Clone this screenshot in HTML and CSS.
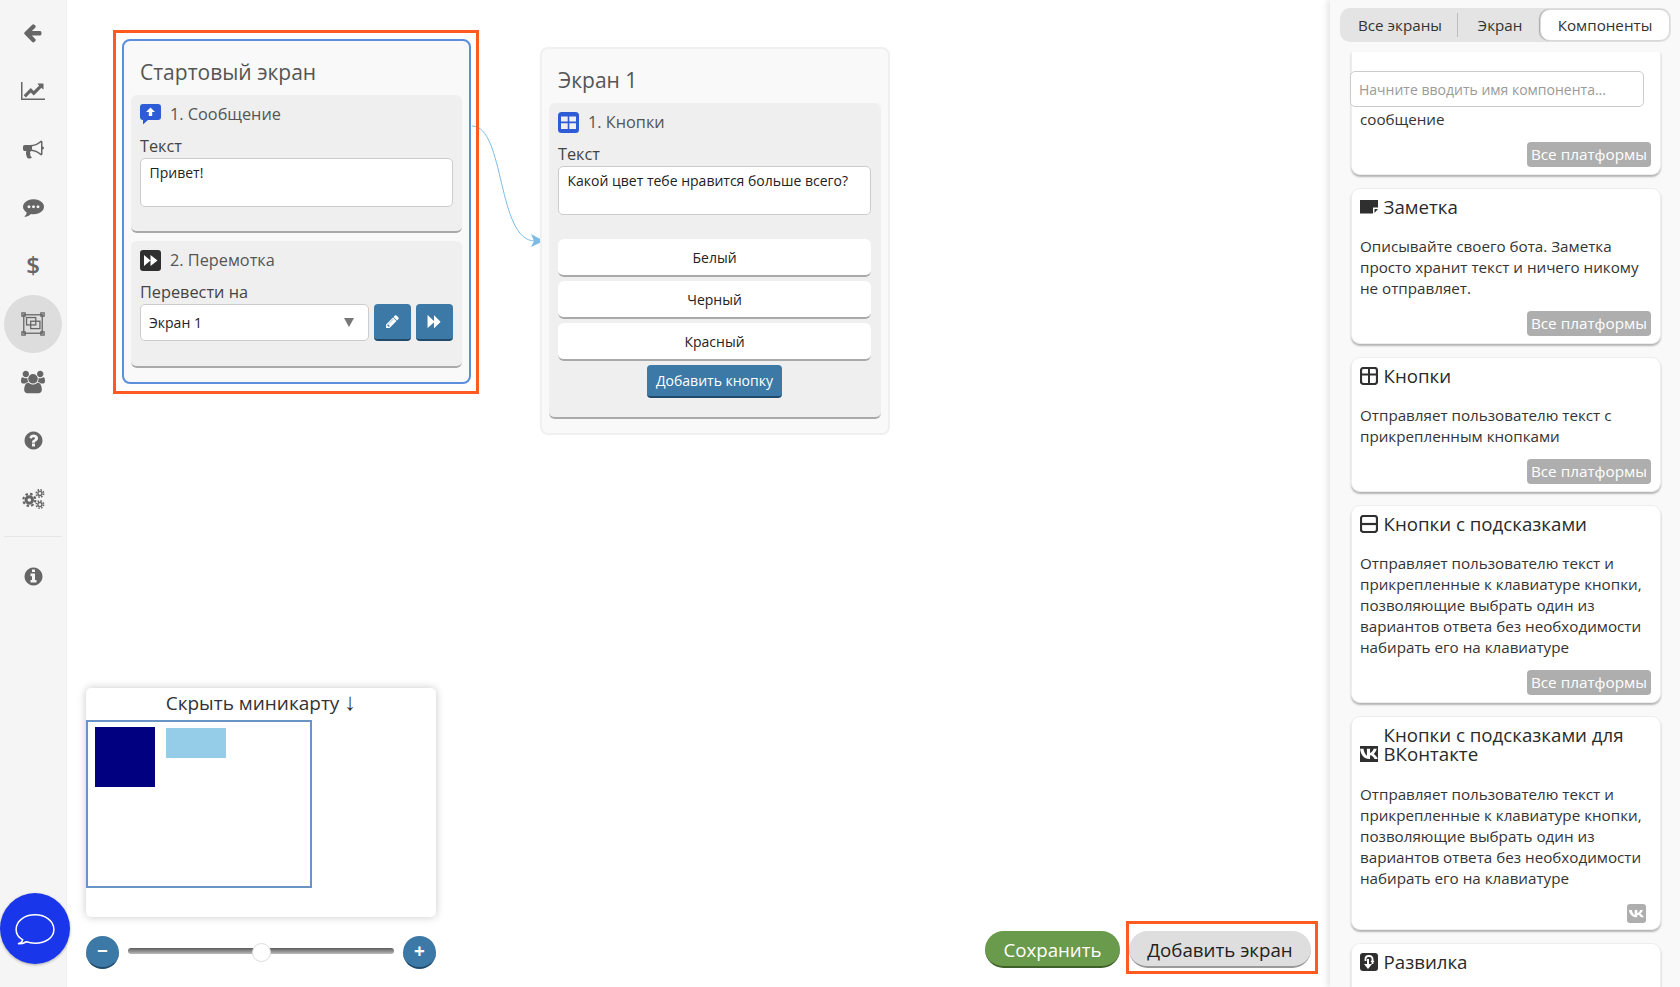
FILE: index.html
```html
<!DOCTYPE html>
<html lang="ru">
<head>
<meta charset="utf-8">
<title>Конструктор</title>
<link rel="stylesheet" href="styles.css">
</head>
<body>
<div class="app">
  <nav class="sidebar">
    <a class="nav-item"><svg class="ico-nav" viewBox="90 80 1792 1792"><path d="M1664 896v128q0 53-32.500 90.500t-84.500 37.500h-704l293 294q38 36 38 90t-38 90l-75 76q-37 37-90 37-52 0-91-37l-651-652q-37-37-37-90 0-52 37-91l651-650q38-38 91-38 52 0 90 38l75 74q38 38 38 91t-38 91l-293 293h704q52 0 84.500 37.500t32.500 90.500z"/></svg></a>
    <a class="nav-item"><svg class="ico-nav wide" viewBox="0 0 2048 1792"><path d="M2048 1536v128h-2048v-1536h128v1408h1920zm-128-1248v435q0 21-19.500 29.500t-35.500-7.500l-121-121-633 633q-10 10-23 10t-23-10l-233-233-416 416-192-192 585-585q10-10 23-10t23 10l233 233 464-464-121-121q-16-16-7.500-35.500t29.500-19.500h435q14 0 23 9t9 23z"/></svg></a>
    <a class="nav-item"><svg class="ico-nav" viewBox="0 0 1792 1792"><path d="M1664 640q53 0 90.500 37.500t37.500 90.500-37.500 90.500-90.500 37.500v384q0 52-38 90t-90 38q-417-347-812-380-58 19-91 66t-31 100.500 40 92.500q-20 33-23 65.500t6 58 33.500 55 48 50 61.500 50.500q-29 58-111.500 83t-168.500 11.500-132-55.500q-7-23-29.500-87.500t-32-94.500-23-89-15-101 3.500-98.500 22-110.500h-122q-66 0-113-47t-47-113v-192q0-66 47-113t113-47h480q435 0 896-384 52 0 90 38t38 90v384zm-128 604v-954q-394 302-768 343v270q377 42 768 341z"/></svg></a>
    <a class="nav-item"><svg class="ico-nav" viewBox="0 -60 1792 1792"><path d="M640 768q0-53-37.500-90.500t-90.500-37.500-90.500 37.500-37.500 90.500 37.500 90.500 90.500 37.500 90.500-37.500 37.500-90.500zm384 0q0-53-37.500-90.500t-90.500-37.500-90.500 37.500-37.500 90.500 37.500 90.500 90.500 37.500 90.500-37.500 37.500-90.500zm384 0q0-53-37.500-90.500t-90.500-37.500-90.500 37.500-37.500 90.500 37.500 90.500 90.500 37.500 90.500-37.500 37.500-90.500zm384 0q0 174-120 321.500t-326 233-450 85.500q-110 0-211-18-173 173-435 229-52 10-86 13-12 1-22-6t-13-18q-4-15 20-37 5-5 23.500-21.500t25.500-23.500 23.500-25.500 24-31.500 20.500-37 20-48 14.500-57.500 12.500-72.500q-146-90-229.500-216.500t-83.500-269.500q0-174 120-321.500t326-233 450-85.500 450 85.500 326 233 120 321.500z"/></svg></a>
    <a class="nav-item nav-dollar">$</a>
    <a class="nav-item active"><svg class="ico-nav wide ico-line" viewBox="0 0 26 26" stroke="#666" stroke-width="1.400"><rect x="3" y="3" width="20" height="20"/><rect x="1" y="1" width="3.500" height="3.500"/><rect x="21.500" y="1" width="3.500" height="3.500"/><rect x="1" y="21.500" width="3.500" height="3.500"/><rect x="21.500" y="21.500" width="3.500" height="3.500"/><rect x="6" y="6" width="10" height="8"/><rect x="10.500" y="10" width="10" height="8"/></svg></a>
    <a class="nav-item"><svg class="ico-nav wide" viewBox="0 0 1920 1792"><path d="M593 896q-162 5-265 128h-134q-82 0-138-40.500t-56-118.500q0-353 124-353 6 0 43.500 21t97.500 42.500 119 21.500q67 0 133-23-5 37-5 66 0 139 81 256zm1071 637q0 120-73 189.500t-194 69.500h-874q-121 0-194-69.500t-73-189.500q0-53 3.500-103.500t14-109 26.500-108.500 43-97.500 62-81 85.500-53.500 111.500-20q10 0 43 21.500t73 48 107 48 135 21.500 135-21.500 107-48 73-48 43-21.500q61 0 111.500 20t85.500 53.500 62 81 43 97.500 26.500 108.500 14 109 3.500 103.500zm-1024-1277q0 106-75 181t-181 75-181-75-75-181 75-181 181-75 181 75 75 181zm704 384q0 159-112.500 271.500t-271.500 112.500-271.500-112.500-112.500-271.500 112.500-271.500 271.500-112.500 271.500 112.500 112.500 271.500zm576 225q0 78-56 118.500t-138 40.500h-134q-103-123-265-128 81-117 81-256 0-29-5-66 66 23 133 23 59 0 119-21.500t97.500-42.500 43.500-21q124 0 124 353zm-128-609q0 106-75 181t-181 75-181-75-75-181 75-181 181-75 181 75 75 181z"/></svg></a>
    <a class="nav-item"><svg class="ico-nav" viewBox="0 0 1792 1792"><path d="M1024 1376v-192q0-14-9-23t-23-9h-192q-14 0-23 9t-9 23v192q0 14 9 23t23 9h192q14 0 23-9t9-23zm256-672q0-88-55.500-163t-138.500-116-170-41q-243 0-371 213-15 24 8 42l132 100q7 6 19 6 16 0 25-12 53-68 86-92 34-24 86-24 48 0 85.500 26t37.500 59q0 38-20 61t-68 45q-63 28-115.500 86.500t-52.500 125.500v36q0 14 9 23t23 9h192q14 0 23-9t9-23q0-19 21.500-49.500t54.500-49.500q32-18 49-28.500t46-35 44.500-48 28-60.500 12.500-81zm384 192q0 209-103 385.500t-279.500 279.500-385.500 103-385.500-103-279.500-279.500-103-385.500 103-385.500 279.500-279.500 385.500-103 385.500 103 279.500 279.500 103 385.500z"/></svg></a>
    <a class="nav-item"><svg class="ico-nav wide ico-line" viewBox="0 0 26 24" stroke="#666"><circle cx="9" cy="13" r="3.500" stroke-width="3.200"/><circle cx="9" cy="13" r="6.500" stroke-width="2.400" stroke-dasharray="2.800 2.310"/><circle cx="20.500" cy="6" r="2.200" stroke-width="1.500"/><circle cx="20.500" cy="6" r="4" stroke-width="1.700" stroke-dasharray="1.700 1.440"/><circle cx="20.500" cy="18" r="2.200" stroke-width="1.500"/><circle cx="20.500" cy="18" r="4" stroke-width="1.700" stroke-dasharray="1.700 1.440"/></svg></a>
    <div class="nav-divider"></div>
    <a class="nav-item"><svg class="ico-nav" viewBox="0 0 1792 1792"><path d="M1152 1376v-160q0-14-9-23t-23-9h-96v-512q0-14-9-23t-23-9h-320q-14 0-23 9t-9 23v160q0 14 9 23t23 9h96v320h-96q-14 0-23 9t-9 23v160q0 14 9 23t23 9h448q14 0 23-9t9-23zm-128-896v-160q0-14-9-23t-23-9h-192q-14 0-23 9t-9 23v160q0 14 9 23t23 9h192q14 0 23-9t9-23zm640 416q0 209-103 385.500t-279.500 279.500-385.500 103-385.500-103-279.500-279.500-103-385.500 103-385.500 279.500-279.500 385.500-103 385.500 103 279.500 279.500 103 385.500z"/></svg></a>
  </nav>

  <main class="canvas">
    <svg class="connector" viewBox="0 0 120 140"><path d="M1 12 C 34 12, 26 127, 64 127" fill="none" stroke="#7dbce6" stroke-width="1"/><path d="M60 120 L73 127 L60 133 L63 127 Z" fill="#7dbce6"/></svg>

    <section class="node node-start">
      <h2 class="node-title">Стартовый экран</h2>
      <div class="block">
        <div class="block-head"><svg class="block-ico" viewBox="0 0 21 21"><path d="M3 0H18a3 3 0 0 1 3 3V13a3 3 0 0 1-3 3H8L3 20.500V16A3 3 0 0 1 0 13V3A3 3 0 0 1 3 0Z" fill="#2e5bd6"/><path d="M10.500 3.500L15 8H12.200V12H8.800V8H6Z" fill="#fff"/></svg><span>1. Сообщение</span></div>
        <label class="field-label">Текст</label>
        <div class="textbox">Привет!</div>
      </div>
      <div class="block">
        <div class="block-head"><svg class="block-ico" viewBox="0 0 21 21"><rect width="21" height="21" rx="3" fill="#2f2f2f"/><path d="M4 5L10.500 10.500L4 16ZM10.500 5L17.500 10.500L10.500 16Z" fill="#fff"/></svg><span>2. Перемотка</span></div>
        <label class="field-label">Перевести на</label>
        <div class="select-row">
          <div class="select"><span>Экран 1</span><i class="select-arrow"></i></div>
          <button class="icon-btn"><svg viewBox="0 0 1792 1792"><path d="M491 1536l91-91-235-235-91 91v107h128v128h107zm523-928q0-22-22-22-10 0-17 7l-542 542q-7 7-7 17 0 22 22 22 10 0 17-7l542-542q7-7 7-17zm-54-192l416 416-832 832h-416v-416zm683 96q0 53-37 90l-166 166-416-416 166-165q36-38 90-38 53 0 91 38l235 234q37 39 37 91z"/></svg></button>
          <button class="icon-btn"><svg viewBox="0 0 1792 1792"><path d="M109 1651q-19 19-32 13t-13-32v-1472q0-26 13-32t32 13l710 710q8 8 13 19v-678q0-26 13-32t32 13l710 710q19 19 19 45t-19 45l-710 710q-19 19-32 13t-13-32v-678q-5 10-13 19z"/></svg></button>
        </div>
      </div>
    </section>
    <div class="hl hl-start"></div>

    <section class="node node-one">
      <h2 class="node-title">Экран 1</h2>
      <div class="block">
        <div class="block-head"><svg class="block-ico" viewBox="0 0 21 21"><rect width="21" height="21" rx="3.500" fill="#2e5bd6"/><path d="M3 4.500H9.700V9.500H3ZM11.300 4.500H18V9.500H11.300ZM3 11.200H9.700V17H3ZM11.300 11.200H18V17H11.300Z" fill="#efefef"/></svg><span>1. Кнопки</span></div>
        <label class="field-label">Текст</label>
        <div class="textbox">Какой цвет тебе нравится больше всего?</div>
        <div class="choices">
          <button class="choice">Белый</button>
          <button class="choice">Черный</button>
          <button class="choice">Красный</button>
        </div>
        <button class="add-choice">Добавить кнопку</button>
      </div>
    </section>

    <div class="mini-wrap">
      <div class="minimap">
        <div class="mini-title">Скрыть миникарту <span class="mini-arrow">↓</span></div>
        <div class="mini-view">
          <div class="mini-a"></div>
          <div class="mini-b"></div>
        </div>
      </div>
      <div class="zoom-row">
        <button class="round-btn">−</button>
        <div class="slider"><i class="thumb"></i></div>
        <button class="round-btn">+</button>
      </div>
    </div>

    <div class="actions">
      <button class="pill pill-green">Сохранить</button>
      <button class="pill pill-grey">Добавить экран</button>
    </div>
    <div class="hl hl-add"></div>
  </main>

  <aside class="panel">
    <div class="tabs">
      <div class="tab tab-all">Все экраны</div>
      <div class="tab tab-screen">Экран</div>
      <div class="tab tab-active">Компоненты</div>
    </div>
    <input class="search" type="text" placeholder="Начните вводить имя компонента...">
    <div class="cards">
      <article class="card card-cut">
        <p class="card-text">сообщение</p>
        <div class="badge">Все платформы</div>
      </article>
      <article class="card">
        <h3 class="card-title"><svg class="card-ico" viewBox="0 0 18 18"><path d="M0 2H18V9.500H13V15.500H0Z" fill="#2f2f2f"/><path d="M14.500 11H18L14.500 15Z" fill="#2f2f2f"/></svg><span>Заметка</span></h3>
        <p class="card-text">Описывайте своего бота. Заметка просто хранит текст и ничего никому не отправляет.</p>
        <div class="badge">Все платформы</div>
      </article>
      <article class="card">
        <h3 class="card-title"><svg class="card-ico" viewBox="0 0 18 18"><rect x="1" y="1" width="16" height="16" rx="2.500" fill="none" stroke="#2f2f2f" stroke-width="2.200"/><path d="M9 1V17M1 7.500H17" stroke="#2f2f2f" stroke-width="2"/></svg><span>Кнопки</span></h3>
        <p class="card-text">Отправляет пользователю текст с прикрепленным кнопками</p>
        <div class="badge">Все платформы</div>
      </article>
      <article class="card">
        <h3 class="card-title"><svg class="card-ico" viewBox="0 0 18 18"><rect x="1" y="1" width="16" height="16" rx="2.500" fill="none" stroke="#2f2f2f" stroke-width="2.200"/><path d="M1 9H17" stroke="#2f2f2f" stroke-width="2.200"/></svg><span>Кнопки с подсказками</span></h3>
        <p class="card-text">Отправляет пользователю текст и прикрепленные к клавиатуре кнопки, позволяющие выбрать один из вариантов ответа без необходимости набирать его на клавиатуре</p>
        <div class="badge">Все платформы</div>
      </article>
      <article class="card card-vk">
        <h3 class="card-title title-wrap"><svg class="card-ico ico-end" viewBox="0 0 18 16"><rect width="18" height="16" fill="#2f2f2f"/><path transform="translate(-1.700 -3.600) scale(1.200 1.400)" d="M1.500 4.500H4.300C4.800 7 6 9 7.200 9.500V4.500H9.800V7.500C11 7.300 12.300 5.800 12.800 4.500H15.400C15 6 13.800 7.500 12.800 8.200C14 8.800 15.500 10 16.300 11.800H13.500C12.900 10.500 11.400 9.300 9.800 9.200V11.800H9C5 11.800 2 9 1.500 4.500Z" fill="#fff"/></svg><span>Кнопки с подсказками для ВКонтакте</span></h3>
        <p class="card-text">Отправляет пользователю текст и прикрепленные к клавиатуре кнопки, позволяющие выбрать один из вариантов ответа без необходимости набирать его на клавиатуре</p>
        <div class="badge-vk"><svg viewBox="0 0 19 19"><path d="M2 6H4.800C5.300 8.500 6.500 10.500 7.700 11V6H10.300V9C11.500 8.800 12.800 7.300 13.300 6H15.900C15.500 7.500 14.300 9 13.300 9.700C14.500 10.300 16 11.500 16.800 13.300H14C13.400 12 11.900 10.800 10.300 10.700V13.300H9.500C5.500 13.300 2.500 10.500 2 6Z" fill="#fff"/></svg></div>
      </article>
      <article class="card">
        <h3 class="card-title"><svg class="card-ico" viewBox="0 0 18 18"><rect width="18" height="18" rx="3" fill="#2f2f2f"/><path d="M5.500 8V6a3 3 0 0 1 3-3h1a3 3 0 0 1 3 3v5" fill="none" stroke="#fff" stroke-width="1.800"/><path d="M8 6V14" fill="none" stroke="#fff" stroke-width="2"/><path d="M4 11H12L8 16Z" fill="#fff"/><path d="M10.500 9H14.500L12.500 6.500Z" fill="#fff"/></svg><span>Развилка</span></h3>
      </article>
    </div>
  </aside>

  <button class="chat-fab"><svg viewBox="0 0 44 36"><path d="M9 29.500C4.500 27 2 23 2 18.500C2 10 10.500 3 22 3S42 10 42 18.500S33.500 33 22 33C18.500 33 15.500 32.500 13 31.500C10.500 33 7.500 33.700 4 33.700C6.500 33 8.500 31.500 9 29.500Z" fill="none" stroke="#fff" stroke-width="1.600"/></svg></button>
</div>
</body>
</html>
```

FILE: styles.css
```css
* { box-sizing: border-box; }
html, body { margin: 0; padding: 0; height: 987px; overflow: hidden; background: #fff; }
body { font-family: "Open Sans", "Liberation Sans", sans-serif; color: #333; }
h2, h3, p { margin: 0; font-weight: 400; }
button { font-family: inherit; cursor: pointer; padding: 0; }

.app { display: flex; height: 987px; overflow: hidden; }

/* sidebar */
.sidebar { width: 67px; flex: none; background: #f5f5f5; padding: 4px 0 0 4px; display: flex; flex-direction: column; border-right: 1px solid #f0f0f0; }
.nav-item { width: 58px; height: 58.2px; flex: none; display: flex; align-items: center; justify-content: center; border-radius: 50%; color: #666; }
.nav-item.active { background: #ddd; }
.ico-nav { width: 21px; height: 21px; fill: #666; }
.ico-nav.wide { width: 24px; height: 24px; }
.ico-nav.ico-line { fill: none; }
.nav-dollar { font-size: 24px; font-weight: 600; padding-bottom: 2px; }
.nav-divider { width: 58px; height: 1px; background: #e6e6e6; margin: 8px 0 11px; flex: none; }

/* canvas */
.canvas { flex: 1; position: relative; min-width: 0; background: #fff; }
.connector { position: absolute; left: 404px; top: 114px; width: 120px; height: 140px; }
.hl { position: absolute; border: 3px solid #ff5a1f; pointer-events: none; }
.hl-start { left: 46px; top: 30px; width: 366px; height: 364px; }
.hl-add { left: 1059px; top: 921px; width: 192px; height: 53px; }

.node { position: absolute; width: 349px; background: #f9f9f9; border-radius: 8px; padding: 17px 7px 14px; }
.node-start { left: 55px; top: 39px; border: 2px solid #5b8edb; }
.node-one { left: 473px; top: 47px; width: 350px; border: 2px solid #f0f0f0; }
.node-title { font-size: 21px; line-height: 28px; color: #555; padding-left: 9px; margin-bottom: 9px; }

.block { background: #efefef; border-radius: 6px; border-bottom: 2px solid #a9a9a9; padding: 9px 9px 24px; }
.block + .block { margin-top: 8px; }
.node-one .block { padding: 9px 10px 19px 9px; display: flex; flex-direction: column; }
.block-head { display: flex; align-items: center; gap: 9px; font-size: 16.3px; line-height: 21px; color: #555; }
.block-ico { width: 21px; height: 21px; flex: none; }
.field-label { display: block; font-size: 16.3px; line-height: 22px; color: #444; margin-top: 10px; }
.textbox { height: 49px; margin-top: 1px; background: #fff; border: 1px solid #ccc; border-radius: 5px; padding: 4px 8.5px; font-size: 14px; line-height: 20px; color: #222; }
.select-row { display: flex; gap: 5px; margin: 1px 0; }
.select { flex: 1; height: 37px; background: #fff; border: 1px solid #ccc; border-radius: 5px; padding: 0 8px; display: flex; align-items: center; justify-content: space-between; font-size: 14px; color: #222; }
.select-arrow { width: 0; height: 0; border-left: 5px solid transparent; border-right: 5px solid transparent; border-top: 9px solid #777; margin-right: 6px; }
.icon-btn { width: 37px; height: 37px; border: 0; border-bottom: 2px solid #1f4a6b; background: #3c79a6; border-radius: 4px; display: flex; align-items: center; justify-content: center; }
.icon-btn svg { width: 15px; height: 15px; fill: #fff; }

.choices { display: flex; flex-direction: column; gap: 4px; margin-top: 24px; }
.choice { height: 38px; border: 0; background: #fff; border-bottom: 2px solid #a9a9a9; border-radius: 6px; font-size: 14px; color: #222; }
.add-choice { align-self: center; width: 135px; height: 33px; margin-top: 4px; border: 0; border-bottom: 2px solid #1f4a6b; border-radius: 4px; background: #3c79a6; color: #fff; font-size: 14px; }

/* minimap */
.mini-wrap { position: absolute; left: 19px; top: 688px; width: 350px; display: flex; flex-direction: column; gap: 19px; }
.minimap { height: 229px; background: #fff; border-radius: 5px; box-shadow: 0 0 8px rgba(0,0,0,.22); }
.mini-title { height: 32px; line-height: 31px; text-align: center; font-size: 19px; color: #333; }
.mini-arrow { font-size: 24px; line-height: 20px; }
.mini-view { position: relative; width: 226px; height: 168px; border: 2px solid #6a94c6; }
.mini-a { position: absolute; left: 7px; top: 5px; width: 60px; height: 60px; background: #000080; }
.mini-b { position: absolute; left: 78px; top: 6px; width: 60px; height: 30px; background: #95cde8; }
.zoom-row { display: flex; align-items: center; gap: 9px; }
.round-btn { width: 33px; height: 33px; flex: none; border: 0; border-bottom: 2px solid #1f4a6b; border-radius: 50%; background: #3c79a6; color: #fff; font-size: 19px; font-weight: 700; line-height: 29px; }
.slider { flex: 1; height: 6px; margin-top: -3px; position: relative; border-radius: 3px; background: linear-gradient(#5c5c5c, #bbb); }
.thumb { position: absolute; left: 124px; top: -5px; width: 19px; height: 19px; border-radius: 50%; background: #fff; border: 1px solid #ddd; }

/* bottom actions */
.actions { position: absolute; right: 19px; top: 931px; display: flex; gap: 9px; }
.pill { height: 37px; border: 0; border-radius: 19px; font-size: 18.7px; line-height: 37px; }
.pill-green { width: 135px; background: #6a9a4b; color: #fff; border-bottom: 2px solid #3f6029; }
.pill-grey { width: 182px; background: #dedede; color: #222; border-bottom: 2px solid #9a9a9a; }

/* right panel */
.panel { width: 350px; flex: none; position: relative; height: 987px; overflow: hidden; background: #f9f9f9; box-shadow: -3px 0 6px rgba(0,0,0,.1); padding: 8px 9px 0 10px; }
.tabs { height: 34px; width: 331px; display: flex; align-items: center; background: #e4e4e4; border-radius: 10px; font-size: 15.2px; color: #333; }
.tab { height: 24px; line-height: 24px; text-align: center; }
.tab-all { width: 118px; padding-left: 3px; border-right: 1px solid #bdbdbd; }
.tab-screen { width: 82px; padding-left: 2px; }
.tab-active { width: 130px; height: 32px; line-height: 30px; background: #fff; border: 1px solid #d9d9d9; border-radius: 10px; box-shadow: -1px 0 1px #aaa; }
.search { position: absolute; left: 20px; top: 71px; width: 294px; height: 36px; border: 1px solid #ccc; border-radius: 5px; background: #fff; padding: 0 8px; font: 14px "Open Sans", sans-serif; color: #333; z-index: 2; }
.search::placeholder { color: #9a9a9a; opacity: 1; }
.cards { display: flex; flex-direction: column; gap: 13px; margin: 10px 10px 0 11px; }
.card { background: #fff; border: 1px solid #eee; border-radius: 9px; box-shadow: 0 2px 2px rgba(0,0,0,.28); padding: 8px 9px 7px 8px; flex: none; }
.card-cut { padding-top: 57px; border-top: 0; border-top-left-radius: 0; border-top-right-radius: 0; }
.card-title { display: flex; align-items: center; gap: 5.5px; font-size: 18.7px; line-height: 20px; color: #2a2a2a; margin-bottom: 19px; }
.card-ico { width: 18px; height: 18px; flex: none; }
.title-wrap { align-items: flex-end; line-height: 19px; margin-bottom: 21px; }
.ico-end { height: 16px; margin-bottom: 1px; }
.card-vk { padding-bottom: 6px; }
.card-text { font-size: 15.2px; line-height: 21px; color: #333; margin-right: -2px; }
.badge { margin: 12px 0 0 auto; width: 124px; height: 25px; line-height: 25px; background: #aeaeae; color: #fff; font-size: 15.3px; text-align: center; border-radius: 4px; white-space: nowrap; }
.badge-vk { margin: 15px 5px 0 auto; width: 19px; height: 19px; background: #aeaeae; border-radius: 3px; }
.badge-vk svg { display: block; width: 19px; height: 19px; }

/* chat */
.chat-fab { position: absolute; left: 0; top: 893px; width: 70px; height: 71px; border: 0; border-radius: 50%; background: #1a36ea; box-shadow: 0 1px 3px rgba(0,0,0,.3); display: flex; align-items: center; justify-content: center; z-index: 3; }
.chat-fab svg { width: 42px; height: 34px; }
```
